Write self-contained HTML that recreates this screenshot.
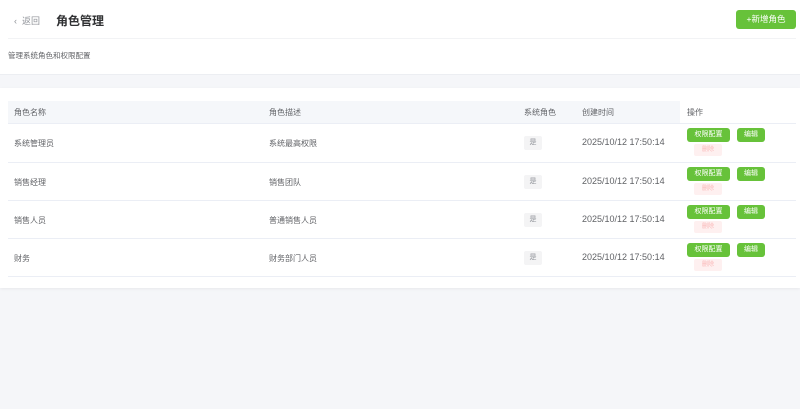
<!DOCTYPE html>
<html><head><meta charset="utf-8"><style>
*{margin:0;padding:0;box-sizing:border-box}
body{width:800px;height:409px;background:#f5f6f9;font-family:"Liberation Sans","Noto Sans CJK SC",sans-serif;color:#606266;position:relative;overflow:hidden}
.hdr{position:absolute;left:0;top:0;width:800px;height:75px;background:#fff;border-bottom:1px solid #eceef2}
.abs{position:absolute}
.card{position:absolute;left:0;top:88px;width:800px;height:200px;background:#fff;box-shadow:0 1px 3px rgba(0,0,0,.06)}
.th{position:absolute;top:13px;height:23px;background:#f5f7fa;left:8px;width:672px}
.t{position:absolute;font-size:8px;white-space:nowrap}
.dt{font-size:9px}
.line{position:absolute;left:8px;width:788px;height:1px;background:#ebeef5}
.tag{position:absolute;left:524px;width:18px;height:14px;background:#f4f4f5;border-radius:2px;font-size:7px;color:#909399;text-align:center;line-height:14px}
.b{position:absolute;height:14px;background:#67c23a;color:#fff;border-radius:3px;font-size:7px;text-align:center;line-height:14px}
.d{position:absolute;height:12px;background:#fef0f0;color:#fab6b6;border-radius:2px;font-size:6px;text-align:center;line-height:12px}
</style></head><body>
<div class="hdr">
<div class="t" style="left:14px;top:14px;font-size:9px;color:#909399">&lsaquo;&nbsp;&nbsp;返回</div>
<div class="t" style="left:56px;top:12px;font-size:12px;font-weight:bold;color:#303133">角色管理</div>
<div class="abs" style="left:736px;top:10px;width:60px;height:19px;background:#67c23a;border-radius:3px;color:#fff;font-size:8.5px;text-align:center;line-height:19px">+新增角色</div>
<div class="abs" style="left:8px;top:38px;width:788px;height:1px;background:#f2f3f5"></div>
<div class="t" style="left:8px;top:50px;font-size:7.5px;color:#606266">管理系统角色和权限配置</div>
</div>
<div class="card">
<div class="th"></div>
<div class="t" style="left:14px;top:19px">角色名称</div>
<div class="t" style="left:269px;top:19px">角色描述</div>
<div class="t" style="left:524px;top:19px">系统角色</div>
<div class="t" style="left:582px;top:19px">创建时间</div>
<div class="t" style="left:687px;top:19px">操作</div>
<div class="line" style="top:35px"></div>
</div>
<div class="abs" style="left:0;top:0">
<div class="t" style="left:14px;top:138px">系统管理员</div><div class="t" style="left:269px;top:138px">系统最高权限</div><div class="tag" style="top:136px">是</div><div class="t dt" style="left:582px;top:137px">2025/10/12 17:50:14</div>
<div class="b" style="left:687px;top:128px;width:43px">权限配置</div><div class="b" style="left:737px;top:128px;width:28px">编辑</div><div class="d" style="left:694px;top:144px;width:28px">删除</div>
<div class="line" style="top:162px"></div>
<div class="t" style="left:14px;top:177px">销售经理</div><div class="t" style="left:269px;top:177px">销售团队</div><div class="tag" style="top:175px">是</div><div class="t dt" style="left:582px;top:176px">2025/10/12 17:50:14</div>
<div class="b" style="left:687px;top:167px;width:43px">权限配置</div><div class="b" style="left:737px;top:167px;width:28px">编辑</div><div class="d" style="left:694px;top:183px;width:28px">删除</div>
<div class="line" style="top:200px"></div>
<div class="t" style="left:14px;top:215px">销售人员</div><div class="t" style="left:269px;top:215px">普通销售人员</div><div class="tag" style="top:213px">是</div><div class="t dt" style="left:582px;top:214px">2025/10/12 17:50:14</div>
<div class="b" style="left:687px;top:205px;width:43px">权限配置</div><div class="b" style="left:737px;top:205px;width:28px">编辑</div><div class="d" style="left:694px;top:221px;width:28px">删除</div>
<div class="line" style="top:238px"></div>
<div class="t" style="left:14px;top:253px">财务</div><div class="t" style="left:269px;top:253px">财务部门人员</div><div class="tag" style="top:251px">是</div><div class="t dt" style="left:582px;top:252px">2025/10/12 17:50:14</div>
<div class="b" style="left:687px;top:243px;width:43px">权限配置</div><div class="b" style="left:737px;top:243px;width:28px">编辑</div><div class="d" style="left:694px;top:259px;width:28px">删除</div>
<div class="line" style="top:276px"></div>
</div>
</body></html>
